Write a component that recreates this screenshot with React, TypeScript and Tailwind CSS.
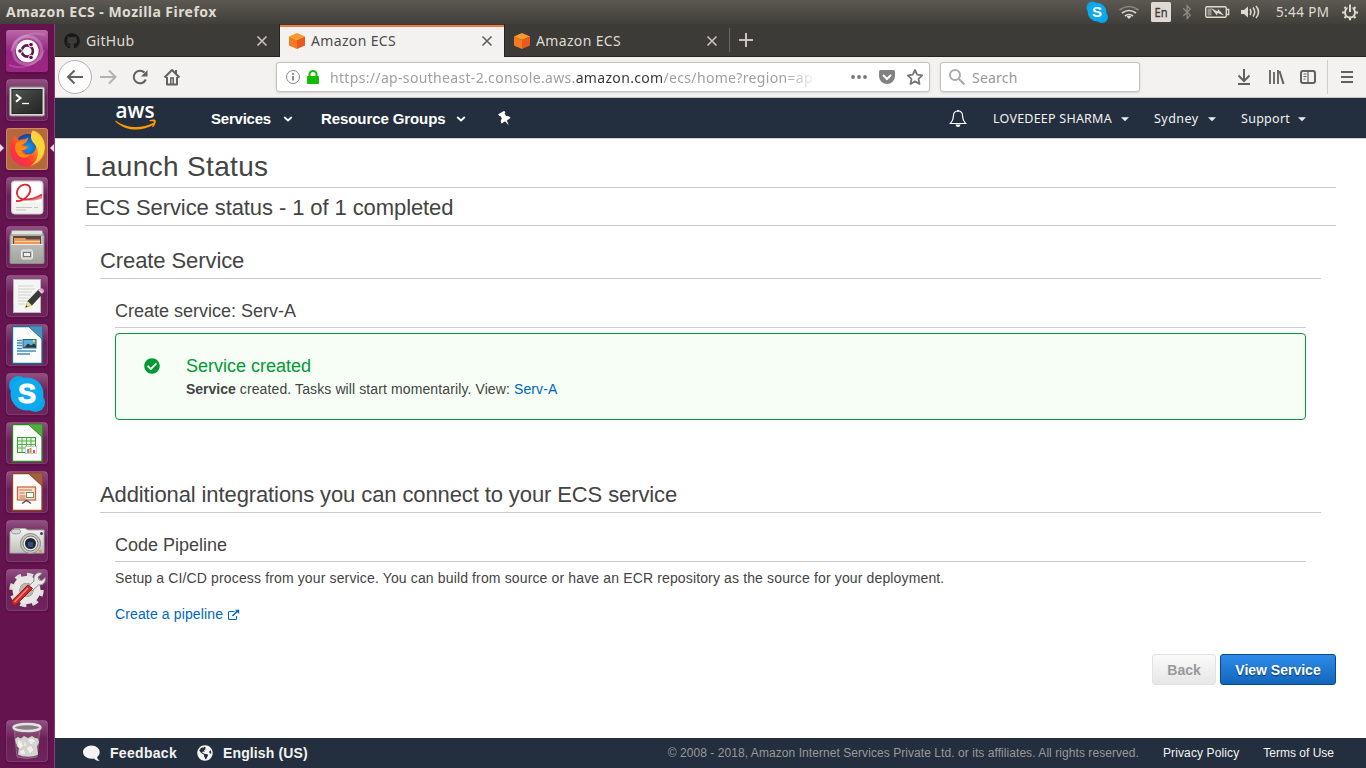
import React from "react";
import { FaGithub, FaCheckCircle, FaBluetoothB, FaGlobeAmericas } from "react-icons/fa";

const UI = "font-['Noto_Sans','Open_Sans',sans-serif]";

/* ---------- Desktop launcher icons (42x42 drawing area) ---------- */

const Ubuntu = () => (
  <>
    <rect width="42" height="42" rx="3" fill="url(#ubBg)" />
    <path d="M7 22C6 11 17 3 28 8c8 4 10 14 5 22M35 17c2 12-9 20-20 16C7 30 5 20 12 13" fill="none" stroke="#fff" strokeOpacity=".25" strokeWidth="3" />
    <path d="M3 35C15 40 33 36 38 20M39 5C27 1 10 5 5 21" fill="none" stroke="#fff" strokeOpacity=".15" strokeWidth="2" />
    <circle cx="21.3" cy="21" r="11.3" fill="#fff" />
    <circle cx="21.3" cy="21" r="5.6" fill="none" stroke="#5e1750" strokeWidth="2.6" />
    <g stroke="#fff" strokeWidth="1" fill="#5e1750">
      <circle cx="14" cy="21" r="2.3" />
      <circle cx="25" cy="14.6" r="2.3" />
      <circle cx="25" cy="27.4" r="2.3" />
    </g>
  </>
);

const Terminal = () => (
  <>
    <rect x="3.500" y="8" width="35" height="29" rx="1.5" fill="#d9d9d6" stroke="#8b8a86" />
    <rect x="6" y="10.5" width="30" height="24" fill="url(#term)" stroke="#222" />
    <path d="M10 15.5l4.5 3.6-4.5 3.6" fill="none" stroke="#fff" strokeWidth="2" />
    <path d="M16 24.5h7" stroke="#fff" strokeWidth="1.3" />
  </>
);

const Firefox = () => (
  <>
    <rect width="42" height="42" rx="3" fill="#b5673f" />
    <rect x=".5" y=".5" width="41" height="41" rx="3" fill="none" stroke="#d08a66" />
    <circle cx="22" cy="19.5" r="13.5" fill="url(#ffBlue)" />
    <path d="M8 8c2 1 4 2.500 5 4.500 2-1 4-1.500 6-1l3-2c0 3-1.500 5-5 7 1 1.500 3 1.500 5 1.500-.5 2.500-3 4-5 4 1 4 6 5.500 9 3.500 5-3 5-9 3-14-1-3-3-4-4-5 0-2 1-3 2-4 8 2 12 10 12 17C39 31 31 38.500 21 38.500S4 31 4 21c0-5 1.500-8 4-13z" fill="url(#ffFire)" />
    <path d="M27 2.500c7 4 11.500 10 11.500 17 0 9-6 16-14 18.500 7-5 9-12 6-19-2-4-6-6-5.500-11 .2-2 1-4 2-5.500z" fill="#ffd43a" />
    <path d="M10 15c3-2 8-2 9-1-1 2-3 2-4 3 2 2 4 2 6 1.500-1 3-3 4-5.500 3.500 0 4 5 6 9 4-3 5-10 5-13.500 0-2-3-2.500-7-1-11z" fill="#ff8a16" />
  </>
);

const Evince = () => (
  <>
    <rect x="5.500" y="4" width="31.500" height="33" rx="3" fill="#f2f2ef" stroke="#c9c5c8" />
    <rect x="7" y="5.500" width="28" height="20" rx="2" fill="#fff" />
    <path d="M10 24C17 25 26 17 24 10.500c-2-4.500-9-3.500-12 1.500-3 6 1 10.500 8 10.500 6 0 11-2 16-5" fill="none" stroke="#d8262c" strokeWidth="1.800" />
    <path d="M18 22.500c7 0 12-2 18-5.500v4.500c-6 2-11 3-18 1z" fill="#e0474b" opacity=".7" />
    <path d="M10 30.500h16M28 30.500h4M10 33h10" stroke="#c4c4c4" strokeWidth="1" />
  </>
);

const Files = () => (
  <>
    <path d="M6 4.500h30l2 7H4z" fill="#e2e2df" stroke="#989894" />
    <rect x="4" y="9" width="34" height="28.500" rx="1" fill="url(#cab)" stroke="#8c8c88" />
    <rect x="7" y="10" width="28" height="8" fill="#5a4a40" />
    <path d="M8 12h11l1.500 1.500H34V18H8z" fill="#ee9652" />
    <path d="M9 15.500h25" stroke="#f8d7b0" />
    <path d="M5 18.500h32" stroke="#eee" />
    <rect x="15.500" y="24" width="11" height="9" rx="1.500" fill="#c9c9c7" stroke="#f0f0f0" />
    <rect x="17.500" y="26.500" width="7" height="4" fill="#eee" stroke="#777" />
  </>
);

const Gedit = () => (
  <>
    <rect x="7.500" y="4.500" width="27" height="33" fill="#f5f5f3" stroke="#b9b6b8" />
    <path d="M12 11h15M12 14h17M12 17h14M12 20h13M12 23h10M12 26h9M12 29h7" stroke="#d2d2d2" strokeWidth="1" />
    <path d="M19.500 32.500l2-6.500L33 14l4.500 4L26 30.500z" fill="#3a3a3a" />
    <path d="M19.500 32.500l2-6.500 4.500 4.500z" fill="#f0dc83" />
    <path d="M32 15l2.500-1.500 3 3-1.500 2.500z" fill="#ddd" />
    <path d="M33.500 14.500c2-2 5 0 4 2.500z" fill="#ee9ac5" stroke="#ee9ac5" />
    <path d="M19.500 32.500l.7-2.300 1.500 1.500z" fill="#222" />
  </>
);

const Doc = ({ color, dark, children }: { color: string; dark: string; children: React.ReactNode }) => (
  <>
    <path d="M6.500 2.500h17L36 14v25.500H6.500z" fill="#fbfbfb" stroke={dark} strokeWidth="1.300" />
    <path d="M22 2h14.500v13.500z" fill={color} stroke={dark} strokeWidth=".8" />
    {children}
  </>
);

const Writer = () => (
  <Doc color="#4593bb" dark="#1f6b92">
    <rect x="17" y="15.500" width="13" height="8.500" fill="#5cb0d8" stroke="#27627f" />
    <path d="M18 23.500l4-4 3 2 3-2 2 2v2z" fill="#253b35" />
    <path d="M11 16.500h5M11 19h5M11 21.500h5M11 24.500h5M11 27h19M11 30h13" stroke="#3e8fbd" strokeWidth="1.500" />
    <circle cx="28" cy="17" r="1.200" fill="#f2d94c" />
  </Doc>
);

const Skype = () => (
  <>
    <circle cx="12.500" cy="12.500" r="9.500" fill="#0ba4e8" />
    <circle cx="29.500" cy="29.500" r="9.500" fill="#0ba4e8" />
    <circle cx="21" cy="21" r="16.500" fill="#0cabed" />
    <text x="21" y="30.300" textAnchor="middle" fontFamily="Liberation Sans" fontWeight="bold" fontSize="27" fill="#fff" stroke="#fff" strokeWidth="1">S</text>
  </>
);

const Calc = () => (
  <Doc color="#4fae3c" dark="#2b8720">
    <rect x="11.500" y="15.500" width="18" height="15" fill="#e4f4df" stroke="#3b9a31" />
    <path d="M11.500 19h18M11.500 22.500h18M11.500 26h18M16 15.500v15M20.500 15.500v15M25 15.500v15" stroke="#5cae52" />
    <rect x="19.500" y="24.500" width="11" height="7" fill="#fff" stroke="#bbb" strokeWidth=".7" />
    <path d="M21 31v-4h2v4z" fill="#5b9cd6" /><path d="M23.500 31v-5h2v5z" fill="#e78932" /><path d="M27 31v-3h2v3z" fill="#d65a50" />
  </Doc>
);

const Impress = () => (
  <Doc color="#a4603b" dark="#8f4420">
    <rect x="11.500" y="16" width="18" height="13" fill="#f7ded0" stroke="#cc6a3e" strokeWidth="1.300" />
    <path d="M13 19h13M13.500 22h5M13.500 25h6M13.500 27h6" stroke="#cf7449" strokeWidth="1.200" />
    <rect x="20.500" y="21.500" width="7" height="5" fill="#fff" stroke="#5c9d58" />
    <path d="M16 32.500l4.500-3 4.500 3" fill="none" stroke="#555" strokeWidth="1.500" />
  </Doc>
);

const Camera = () => (
  <>
    <path d="M6 10l3-1.500h10l3 1.500h16v23H4V12z" fill="url(#cam)" stroke="#aaa" />
    <ellipse cx="10" cy="11.500" rx="4.500" ry="2.500" fill="#d8d8d6" stroke="#888" strokeWidth=".8" />
    <circle cx="24.500" cy="23.500" r="10" fill="#c8c8c5" stroke="#888" />
    <circle cx="24.500" cy="23.500" r="7.500" fill="#e7e7e5" stroke="#777" />
    <circle cx="24.500" cy="23.500" r="5.500" fill="#20252c" />
    <rect x="22" y="22" width="5" height="5" fill="#314d83" />
    <circle cx="35.500" cy="13.500" r="1.500" fill="#444" /><circle cx="34.500" cy="31" r="1.500" fill="#e9962f" />
  </>
);

const Settings = () => (
  <>
    <circle cx="20.500" cy="21" r="15" fill="none" stroke="#dededc" strokeWidth="4.500" strokeDasharray="6 5.780" />
    <circle cx="20.500" cy="21" r="10.500" fill="none" stroke="#e8e8e6" strokeWidth="7" />
    <circle cx="20.500" cy="21" r="7" fill="#b9b6b8" />
    <path d="M29 6c2-2.500 5-3 7-1.500l-4 3.500 1 3 3 .5 3-3c1.500 4-2 8-6.500 7.500L26 22l-4.500-4 6.500-6c-.5-2 0-4.500 1-6z" fill="#e9e9e8" stroke="#8e8e8c" />
    <path d="M26.500 19.500L11 35c-3 3-7-.5-4.500-3.800L22 16z" fill="#cf2929" stroke="#8f1616" />
    <path d="M22 19L8.500 33" stroke="#ef8a80" strokeWidth="1.500" />
  </>
);

const Trash = () => (
  <>
    <path d="M8 9h26l-3 28q-10 3-20 0z" fill="#d7d2d6" fillOpacity=".16" stroke="#b8a9b5" strokeOpacity=".4" />
    <path d="M9 19l3-2 3 1.500 3-2.500 4 2 4-2 3 2 3 .5 1 4-2 4 1 8c-5 3-15 3-20 0l1-7-3-4z" fill="#d4d5d0" />
    <path d="M12 19l4 3 2 4-4 3-3-3zM21 19l5-1 4 3-5 4zM20 28l5-3 3 5-4 4zM13 31l5-2 2 5-5 1zM19 20l2 5-3 2" fill="#efefec" stroke="#c2c2bd" strokeWidth=".6" />
    <ellipse cx="21" cy="7.500" rx="13.500" ry="3.500" fill="#897d86" stroke="#e3e3df" strokeWidth="2.400" />
  </>
);

const launcher = [Ubuntu, Terminal, Firefox, Evince, Files, Gedit, Writer, Skype, Calc, Impress, Camera, Settings];

const Tile = ({ Icon }: { Icon: () => React.JSX.Element }) => (
  <svg width="42" height="42" viewBox="0 0 42 42" className="block shrink-0 overflow-visible">
    <rect x="-1" y="0" width="44" height="44" rx="4" fill="#2e0828" fillOpacity=".18" />
    <rect x=".5" y=".5" width="41" height="41" rx="3" fill="url(#tile)" stroke="#e9a8dd" strokeOpacity=".22" />
    <Icon />
  </svg>
);

const Defs = () => (
  <svg width="0" height="0" className="absolute">
    <defs>
      <linearGradient id="tile" x1="0" y1="0" x2="0" y2="1"><stop offset="0" stopColor="#f3c9ea" stopOpacity=".36" /><stop offset=".45" stopColor="#f3b0e4" stopOpacity=".1" /><stop offset="1" stopColor="#f3b0e4" stopOpacity=".13" /></linearGradient>
      <linearGradient id="ubBg" x1="0" y1="0" x2="0" y2="1"><stop offset="0" stopColor="#b86aa8" /><stop offset=".5" stopColor="#952481" /><stop offset="1" stopColor="#9f2685" /></linearGradient>
      <linearGradient id="term" x1="0" y1="0" x2="1" y2="1"><stop offset="0" stopColor="#555753" /><stop offset=".5" stopColor="#393b39" /><stop offset="1" stopColor="#222423" /></linearGradient>
      <radialGradient id="ffBlue"><stop offset="0" stopColor="#159be8" /><stop offset="1" stopColor="#1b3e9b" /></radialGradient>
      <linearGradient id="ffFire" x1="0" y1="1" x2="1" y2="0"><stop offset="0" stopColor="#f0207a" /><stop offset=".35" stopColor="#ff3b2e" /><stop offset=".7" stopColor="#ff9d1b" /><stop offset="1" stopColor="#fff048" /></linearGradient>
      <linearGradient id="cab" x1="0" y1="0" x2="0" y2="1"><stop offset="0" stopColor="#c9c9c7" /><stop offset="1" stopColor="#9f9f9c" /></linearGradient>
      <linearGradient id="cam" x1="0" y1="0" x2="0" y2="1"><stop offset="0" stopColor="#f5f5f3" /><stop offset="1" stopColor="#bdbdba" /></linearGradient>
    </defs>
  </svg>
);

/* ---------- Small shared drawings ---------- */

const Cube = () => (
  <svg width="16" height="16" viewBox="0 0 16 16" className="block shrink-0">
    <path d="M8 0l8 3.500L8 7 0 3.500z" fill="#fb9a2b" />
    <path d="M0 3.500L8 7v9l-8-3.500z" fill="#f47b20" />
    <path d="M16 3.500L8 7v9l8-3.500z" fill="#e8591e" />
  </svg>
);

const Close = ({ color }: { color: string }) => (
  <svg width="12" height="12" viewBox="0 0 12 12" className="block shrink-0">
    <path d="M1.500 1.500l9 9M10.500 1.500l-9 9" stroke={color} strokeWidth="1.600" />
  </svg>
);

const Chevron = () => (
  <svg width="10" height="6" viewBox="0 0 10 6" className="block shrink-0">
    <path d="M1.200 1L5 4.500 8.800 1" fill="none" stroke="#fff" strokeWidth="1.800" />
  </svg>
);

const Caret = () => (
  <svg width="8" height="5" viewBox="0 0 8 5" className="block shrink-0">
    <path d="M0 .3h8L4 4.300z" fill="#eee" />
  </svg>
);

const SystemBar = () => (
  <header className={`flex h-6 items-center bg-linear-to-b from-[#5b5951] to-[#413f3a] text-[#dfdbd2] ${UI}`}>
    <span className="pl-[6px] text-[14px] font-bold leading-6 tracking-[0.460px]">Amazon ECS - Mozilla Firefox</span>
    <svg width="280" height="24" viewBox="1086 0 280 24" className="ml-auto block">
      <circle cx="1092.500" cy="7.500" r="6" fill="#0ba4e8" /><circle cx="1102" cy="17" r="6" fill="#0ba4e8" /><circle cx="1097" cy="12" r="9.300" fill="#0cabed" />
      <text x="1097" y="17.300" textAnchor="middle" fontFamily="Liberation Sans" fontWeight="bold" fontSize="15" fill="#fff">S</text>
      <g fill="none" strokeWidth="1.700">
        <path d="M1119.500 10q9.500-7 19 0" stroke="#8e8a82" />
        <path d="M1122 13q7-5 14 0M1125 16q4-3 8 0" stroke="#dfdbd2" />
      </g>
      <path d="M1126.500 16.500q2.500-1.500 5 0l-2.500 2.500z" fill="#dfdbd2" />
      <rect x="1151" y="2" width="20" height="20" rx="1.500" fill="#dfdbd2" />
      <text x="1161" y="17" textAnchor="middle" fontFamily="Noto Sans" fontSize="12" fill="#3c3b37" stroke="#3c3b37" strokeWidth=".3" textLength="13" lengthAdjust="spacingAndGlyphs">En</text>
      <rect x="1205.700" y="6.700" width="20.600" height="10.600" rx="1.500" fill="none" stroke="#dfdbd2" strokeWidth="1.400" />
      <path d="M1227 9.500h1.700v5H1227" fill="none" stroke="#dfdbd2" strokeWidth="1.300" />
      <rect x="1207.500" y="8.500" width="4" height="7" fill="#98948b" />
      <path d="M1211 8l6.500 3.500.5-2.500 6 6.500-6.500-2.500-.5 2.500z" fill="#dfdbd2" />
      <path d="M1241 10h3l4-3.500v11l-4-3.500h-3z" fill="#dfdbd2" />
      <path d="M1250 9q2 3 0 6M1253 7.500q3.500 4.500 0 9M1256 6q5 6 0 12" fill="none" stroke="#dfdbd2" strokeWidth="1.500" />
      <circle cx="1350" cy="12.500" r="5" fill="none" stroke="#dfdbd2" strokeWidth="2" />
      <path d="M1350 20.300v-2.500M1342 12.500h2.500M1355.500 12.500h2.500M1344.500 7l1.500 1.500M1355.500 7l-1.500 1.500M1344.500 18l1.500-1.500M1355.500 18l-1.500-1.500" stroke="#dfdbd2" strokeWidth="2.200" />
      <path d="M1350 4v8" stroke="#4e4c46" strokeWidth="5" /><path d="M1350 4.500v7.500" stroke="#dfdbd2" strokeWidth="2" />
      <text x="1276" y="17" fontFamily="Noto Sans" fontSize="13.500" textLength="53" fill="#dfdbd2">5:44 PM</text>
      <g transform="translate(1179 4)" color="#8e8a82"><FaBluetoothB size={16} /></g>
    </svg>
  </header>
);

const Tabs = () => (
  <div className={`flex h-[33px] border-b border-[#252421] bg-[#3c3b37] text-[14px] ${UI}`}>
    <div className="flex w-[225px] items-center border-r border-[#252421] pl-[9px] pr-[11px] pt-[2px] text-[#dfdbd2]">
      <FaGithub size={16} color="#191717" /><span className="-mt-[2px] ml-[6px] tracking-[0.300px]">GitHub</span><span className="ml-auto"><Close color="#c9c5bd" /></span>
    </div>
    <div className="-mb-px mt-px flex w-[224px] items-center border-t-2 border-[#f07746] bg-[#f3f2f0] pb-[3px] pl-[9px] pr-[11px] text-[#4c4c4c]">
      <Cube /><span className="-mt-px ml-[6px] tracking-[0.350px]">Amazon ECS</span><span className="ml-auto"><Close color="#5f5f5d" /></span>
    </div>
    <div className="flex w-[225px] items-center border-l border-[#252421] pl-[9px] pr-[11px] pt-[2px] text-[#dfdbd2]">
      <Cube /><span className="-mt-[2px] ml-[6px] tracking-[0.350px]">Amazon ECS</span><span className="ml-auto"><Close color="#c9c5bd" /></span>
    </div>
    <div className="my-auto h-6 w-px bg-[#6a6862]" />
    <svg width="32" height="32" viewBox="0 0 32 32"><path d="M16 9v14M9 16h14" stroke="#c9c5bd" strokeWidth="2" /></svg>
  </div>
);

const Toolbar = () => (
  <div className={`flex h-[41px] items-center border-b border-[#c5c3c1] bg-[#f3f2f0] ${UI}`}>
    <svg width="221" height="40" viewBox="55 57 221 40" className="block shrink-0" fill="none" strokeWidth="2">
      <circle cx="75" cy="77" r="16.500" fill="#fcfcfc" stroke="#b4b3b1" strokeWidth="1" />
      <path d="M83 77H68M74.500 70.500L68 77l6.500 6.500" stroke="#62615f" />
      <path d="M100 77h15M109 70.500l6.500 6.500-6.500 6.500" stroke="#b3b2b0" />
      <path d="M145.800 79.500a6.300 6.300 0 1 1-1.300-7" stroke="#62615f" /><path d="M147.500 70v6.500H141z" fill="#62615f" />
      <path d="M164.500 77.500L172 70l7.500 7.500M167 77v7.500h10V77" stroke="#62615f" strokeLinejoin="round" />
      <path d="M170.800 84v-6h2.400v6" stroke="#62615f" strokeWidth="1.500" /><path d="M176 70v4" stroke="#62615f" />
    </svg>
    <div className="flex h-[30px] w-[654px] shrink-0 items-center rounded-[3px] border border-[#c3c1be] bg-white shadow-sm">
      <svg width="44" height="28" viewBox="277 63 44 28" className="block">
        <circle cx="293" cy="77" r="6.500" fill="none" stroke="#858585" /><path d="M293 76v4.500M293 73v1.700" stroke="#777" strokeWidth="1.700" />
        <rect x="307" y="76" width="12" height="8" rx="1" fill="#12bc00" /><path d="M309.500 77v-2.500a3.500 3.500 0 0 1 7 0V77" fill="none" stroke="#12bc00" strokeWidth="2" />
      </svg>
      <div className="ml-[9px] w-[488px] whitespace-nowrap text-[14px] tracking-[0.330px] text-[#a0a09f] mask-r-from-93% mask-r-to-100%">
        https://ap-southeast-2.console.aws.<span className="text-[#3b3b3b]">amazon.com</span>/ecs/home?region=ap-
      </div>
      <svg width="80" height="28" viewBox="849 63 80 28" className="ml-auto block">
        <g fill="#777"><circle cx="853" cy="77" r="1.900" /><circle cx="859" cy="77" r="1.900" /><circle cx="865" cy="77" r="1.900" /></g>
        <path d="M880.500 70h13q1.500 0 1.500 1.500V76a8 8 0 0 1-16 0v-4.500q0-1.500 1.500-1.500z" fill="#818181" /><path d="M883 75l4 4 4-4" fill="none" stroke="#fff" strokeWidth="2" />
        <path d="M915 70l2.200 4.700 5 .6-3.700 3.500 1 5.200-4.500-2.600-4.500 2.600 1-5.200-3.700-3.500 5-.6z" fill="none" stroke="#777" strokeWidth="1.800" strokeLinejoin="round" />
      </svg>
    </div>
    <div className="ml-[10px] flex h-[30px] w-[200px] shrink-0 items-center rounded-[3px] border border-[#c3c1be] bg-white shadow-sm">
      <svg width="31" height="28" viewBox="941 63 31 28" className="block"><circle cx="955" cy="75" r="5" fill="none" stroke="#aaa" strokeWidth="2" /><path d="M958.500 78.500l6 6" stroke="#aaa" strokeWidth="2.200" /></svg>
      <span className="text-[14px] tracking-[0.200px] text-[#999]">Search</span>
    </div>
    <svg width="226" height="40" viewBox="1140 57 226 40" className="block" fill="none" stroke="#62615f" strokeWidth="2">
      <path d="M1244 69v12M1238.500 75.500l5.500 5.500 5.500-5.500M1238 84h12" />
      <path d="M1270 70v14M1274 72v12M1278 70v14" strokeWidth="1.800" /><path d="M1279.500 71l4 13" />
      <rect x="1301" y="71" width="14" height="12" rx="2" /><path d="M1308 71v12M1303.500 74h3M1303.500 76.500h3M1303.500 79h2" strokeWidth="1.200" />
      <path d="M1327.500 60v34" stroke="#d0cecc" strokeWidth="1" />
      <path d="M1341 72h12M1341 77h12M1341 82h12" />
    </svg>
  </div>
);

const AwsNav = () => (
  <nav className="flex h-10 items-center bg-[#232f3e] text-[15px] font-bold text-white">
    <svg width="44" height="40" viewBox="114 98 44 40" className="ml-[59px] block overflow-visible">
      <text x="115.500" y="118" fontFamily="Open Sans" fontWeight="600" fontSize="21" textLength="39" lengthAdjust="spacingAndGlyphs" fill="#fff">aws</text>
      <path d="M115.500 120.500c11 8 26 8.500 37.500 2.500l.8 1.400c-12 7.500-28 7-38.500-3z" fill="#f90" />
      <path d="M149.500 120.300c3-1.200 6.500-.8 6.300.7-.1 2.200-1 4.600-3 6.300l-.6-.5 1.600-5.300c-1.300-.4-2.800-.5-4.300-.2z" fill="#f90" />
    </svg>
    <div className="ml-[53px] mt-[2px] flex w-[82px] items-center justify-between"><span className="tracking-[-0.220px]">Services</span><Chevron /></div>
    <div className="ml-[28px] mt-[2px] flex w-[145px] items-center justify-between"><span className="tracking-[-0.090px]">Resource Groups</span><Chevron /></div>
    <svg width="16" height="16" viewBox="0 0 16 16" className="ml-[31px] mt-px block"><g transform="rotate(-30 8 8)" fill="#fff"><path d="M4.500.5h7v2.300h-1V6q2.800 1.200 2.800 4H2.700q0-2.800 2.800-4V2.800h-1zM7 10h2l-1 5.500z" /></g></svg>
    <svg width="18" height="19" viewBox="0 0 18 19" className="ml-auto block"><path d="M9 2c-3.200 0-4.600 2.200-4.600 5.200 0 4-1.400 5.500-3 7.300h15.200c-1.600-1.800-3-3.300-3-7.300C13.600 4.200 12.200 2 9 2z" fill="none" stroke="#fff" strokeWidth="1.200" /><path d="M6.500 15.500h5Q11 18 9 18t-2.500-2.500zM8 1h2v1.500H8z" fill="#fff" /></svg>
    <div className="ml-[26px] mt-[2px] flex items-center font-['Noto_Sans',sans-serif] text-[12.500px] font-normal text-[#f2f2f2]">
      <span className="flex w-[161px] items-center gap-[9px]"><span className="tracking-[0.230px]">LOVEDEEP SHARMA</span><Caret /></span>
      <span className="flex w-[87px] items-center gap-[9px]"><span className="tracking-[0.450px]">Sydney</span><Caret /></span>
      <span className="flex w-[125px] items-center gap-[8px]"><span className="tracking-[0.280px]">Support</span><Caret /></span>
    </div>
  </nav>
);

const Main = () => (
  <main className="grow border-t border-[#d5d5d5] bg-white px-[30px] text-[14px] leading-5 text-[#444]">
    <h1 className="flex h-[49px] items-center border-b border-[#ccc] pt-[7px] text-[28px]"><span className="tracking-[0.340px]">Launch Status</span></h1>
    <h2 className="flex h-[38px] items-center border-b border-[#ccc] pt-[3px] text-[22px] tracking-[-0.090px]">ECS Service status - 1 of 1 completed</h2>
    <section className="px-[15px]">
      <h2 className="flex h-[53px] items-end border-b border-[#ccc] pb-[5px] text-[22px] leading-[25px] tracking-[-0.090px]">Create Service</h2>
      <div className="px-[15px]">
        <h3 className="flex h-[49px] items-end border-b border-[#ccc] pb-[6px] text-[18px]">Create service: Serv-A</h3>
        <div className="mt-[5px] flex h-[87px] rounded-[4px] border border-[#009933] bg-[#f6fef6] pl-[28px] pt-[21px]">
          <FaCheckCircle size={16} color="#009933" className="mt-[3px] shrink-0" />
          <div className="ml-[26px]">
            <h4 className="text-[18px] leading-[22px] text-[#009933]">Service created</h4>
            <p className="mt-[2px] tracking-[0.110px]"><b className="tracking-normal">Service</b> created. Tasks will start momentarily. View: <a className="text-[#0066bb]">Serv-A</a></p>
          </div>
        </div>
      </div>
      <h2 className="mt-[40px] flex h-[53px] items-end border-b border-[#ccc] pb-[5px] text-[22px] leading-[25px] tracking-[-0.105px]">Additional integrations you can connect to your ECS service</h2>
      <div className="px-[15px]">
        <h3 className="flex h-[49px] items-end border-b border-[#ccc] pb-[6px] text-[18px]">Code Pipeline</h3>
        <p className="mt-[6px] tracking-[0.140px]">Setup a CI/CD process from your service. You can build from source or have an ECR repository as the source for your deployment.</p>
        <a className="mt-4 flex items-center text-[#0066bb]"><span className="tracking-[0.130px]">Create a pipeline</span>
          <svg width="13" height="12" viewBox="0 0 13 12" className="ml-1 mt-px block" fill="none" stroke="#0066bb"><path d="M7.500 2.500H2.500Q1.500 2.500 1.500 3.500v6Q1.500 10.500 2.500 10.500h6q1 0 1-1V7" strokeWidth="1.100" /><path d="M5.500 7L10.500 2" strokeWidth="1.600" /><path d="M8 .8h4.200V5z" fill="#0066bb" stroke="none" /></svg>
        </a>
      </div>
    </section>
    <div className="mt-[30px] flex justify-end gap-1 text-[14px] font-bold">
      <button className="h-[31px] w-16 rounded-[3px] border border-[#e2e2e2] bg-linear-to-b from-[#fafafa] to-[#e6e6e6] text-[#999]">Back</button>
      <button className="h-[31px] w-[116px] rounded-[3px] border border-[#094a8a] bg-linear-to-b from-[#2e8bea] to-[#1166bb] text-white text-shadow-[0_1px_1px_#0a3666]">View Service</button>
    </div>
  </main>
);

const Footer = () => (
  <footer className="flex h-[30px] shrink-0 items-center bg-[#232f3e] pl-[28px] pr-[32px] text-[12px] text-[#f4f4f4]">
    <svg width="18" height="17" viewBox="0 0 18 17" className="block"><path d="M8.500.5c4.700 0 8.200 3 8.200 6.500 0 2.300-1 4-2.600 5 .2 1.700 1.200 2.800 2.700 3.800-2.400.2-4.500-.6-5.800-2.300-6 1-11-2-11-6.500C0 3.500 3.800.5 8.500.5z" fill="#f4f4f4" /></svg>
    <span className="ml-[9px] text-[14px] font-bold tracking-[0.300px]">Feedback</span>
    <FaGlobeAmericas size={16} color="#f4f4f4" className="ml-[20px]" />
    <span className="ml-[10px] text-[14px] font-bold tracking-[0.130px]">English (US)</span>
    <span className="ml-auto tracking-[0.062px] text-[#999]">© 2008 - 2018, Amazon Internet Services Private Ltd. or its affiliates. All rights reserved.</span>
    <span className="ml-[24px] tracking-[0.120px]">Privacy Policy</span>
    <span className="ml-[24px]">Terms of Use</span>
  </footer>
);

export default function App() {
  return (
    <div className="flex h-[768px] w-[1366px] flex-col overflow-hidden bg-white font-['Liberation_Sans',sans-serif]">
      <Defs />
      <SystemBar />
      <div className="flex h-[744px]">
        <aside className="relative flex w-[55px] shrink-0 flex-col gap-[7px] border-r border-[#874179] bg-[#64134f] pb-[6px] pl-[6px] pt-[6px]">
          {launcher.map((Icon, i) => <Tile key={i} Icon={Icon} />)}
          <div className="mt-auto"><Tile Icon={Trash} /></div>
          <svg width="54" height="8" viewBox="0 0 54 8" className="absolute left-0 top-[120px]"><path d="M0 0l4 4-4 4zM54 0l-4 4 4 4z" fill="#e8dbe6" /></svg>
        </aside>
        <div className="flex min-w-0 grow flex-col">
          <Tabs />
          <Toolbar />
          <AwsNav />
          <Main />
          <Footer />
        </div>
      </div>
    </div>
  );
}
